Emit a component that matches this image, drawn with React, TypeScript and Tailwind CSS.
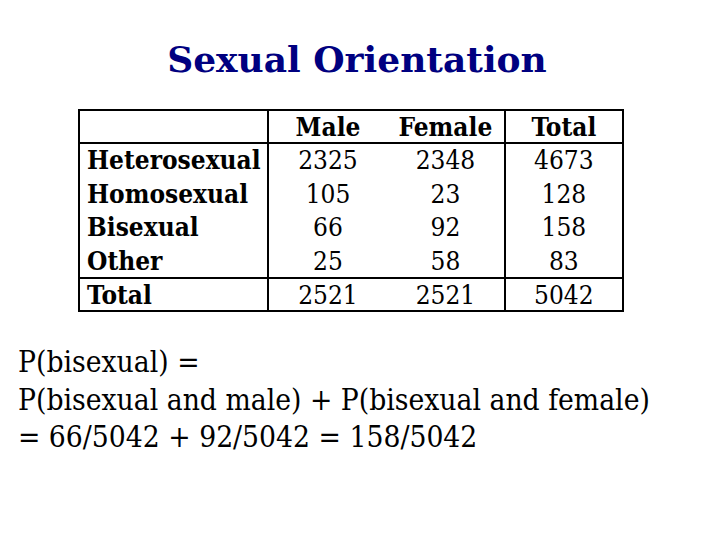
const rows = [
  { label: "Heterosexual", male: "2325", female: "2348", total: "4673" },
  { label: "Homosexual", male: "105", female: "23", total: "128" },
  { label: "Bisexual", male: "66", female: "92", total: "158" },
  { label: "Other", male: "25", female: "58", total: "83" },
];

const serif = "font-['DejaVu_Serif','Liberation_Serif',serif]";

export default function App() {
  return (
    <div className="w-[720px] h-[540px] bg-white text-black overflow-hidden">
      <h1
        className={`${serif} pt-[35px] text-center text-[36px] leading-[48px] font-bold text-[#000080] pr-[6px]`}
      >
        Sexual Orientation
      </h1>

      <table
        className={`${serif} font-stretch-condensed ml-[78px] mt-[26px] w-[546px] border-collapse border-2 border-black text-[26px] leading-[30px]`}
      >
        <colgroup>
          <col className="w-[189px]" />
          <col className="w-[120px]" />
          <col className="w-[118px]" />
          <col className="w-[119px]" />
        </colgroup>
        <thead>
          <tr className="h-[33px] border-b-2 border-black">
            <th className="border-r-2 border-black" />
            <th className="font-bold">Male</th>
            <th className="font-bold border-r-2 border-black">Female</th>
            <th className="font-bold">Total</th>
          </tr>
        </thead>
        <tbody>
          {rows.map((r) => (
            <tr key={r.label} className="h-[33.75px]">
              <td className="pl-[7px] font-bold border-r-2 border-black">{r.label}</td>
              <td className="text-center">{r.male}</td>
              <td className="text-center border-r-2 border-black">{r.female}</td>
              <td className="text-center">{r.total}</td>
            </tr>
          ))}
          <tr className="h-[33px] border-t-2 border-black">
            <td className="pl-[7px] font-bold border-r-2 border-black">Total</td>
            <td className="text-center">2521</td>
            <td className="text-center border-r-2 border-black">2521</td>
            <td className="text-center">5042</td>
          </tr>
        </tbody>
      </table>

      <div className={`${serif} font-stretch-condensed mt-[31px] pl-[18px] text-[29.7px] leading-[37.5px]`}>
        <p>P(bisexual) =</p>
        <p>P(bisexual and male) + P(bisexual and female)</p>
        <p>= 66/5042 + 92/5042 = 158/5042</p>
      </div>
    </div>
  );
}
